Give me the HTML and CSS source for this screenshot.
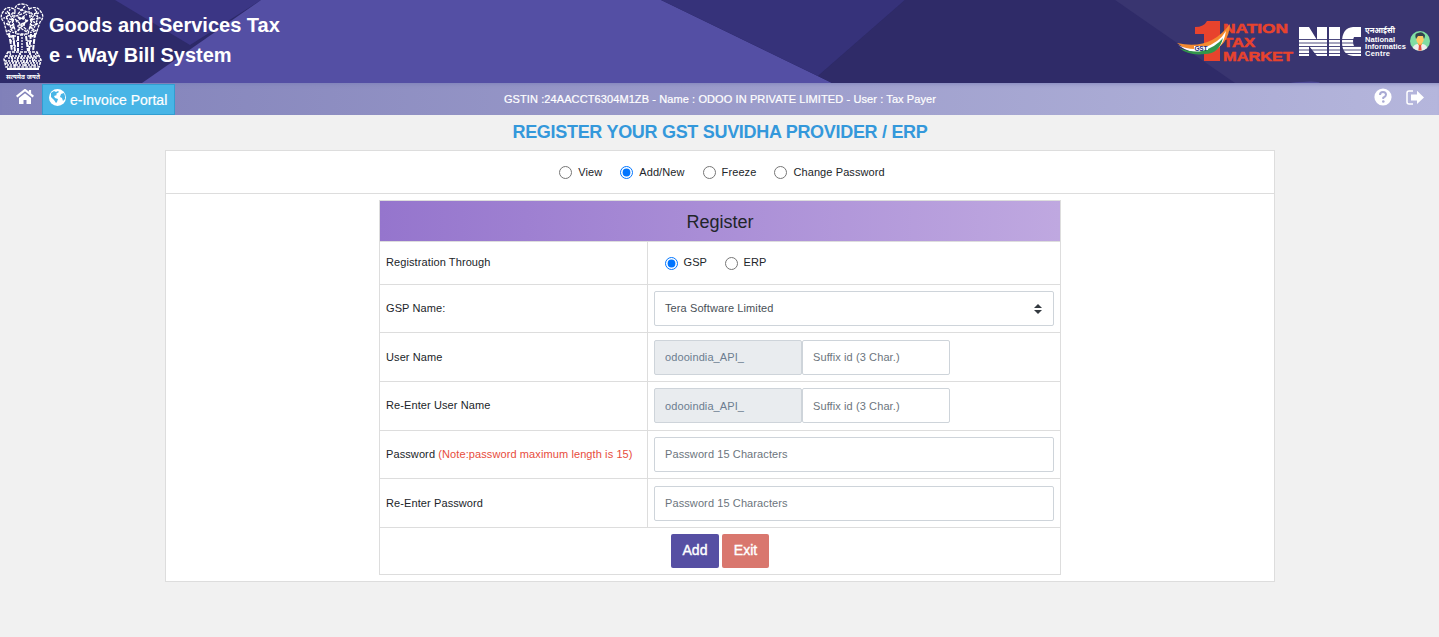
FILE: index.html
```html
<!DOCTYPE html>
<html lang="en">
<head>
<meta charset="utf-8">
<title>e-Way Bill System</title>
<link rel="stylesheet" href="styles.css">
</head>
<body>
<header class="header">
  <svg class="header-bg" viewBox="0 0 1439 83" preserveAspectRatio="none" aria-hidden="true">
    <rect width="1439" height="83" fill="#2d2a69"/>
    <path d="M115 0H261L190 45Z" fill="#3b3685"/>
    <path d="M142 83L261 0H661L832 83Z" fill="#544fa4"/>
    <path d="M661 0H905L818 76Z" fill="#36327a"/>
    <path d="M905 0H1115L1245 83H832L818 76Z" fill="#2f2b68"/>
    <path d="M1115 0H1439V83H1235Z" fill="#393570"/>
    <path d="M1290 83q27-3 30 0Z" fill="#4c4794"/>
  </svg>
  <div class="brand">
    <svg class="emblem" viewBox="0 0 44 80" aria-hidden="true">
      <g fill="none" stroke="#fff" stroke-width="1.3">
        <path d="M15 12q-1-8 7-8t7 8l2 10-3 12H16l-3-12Z" stroke-dasharray="3 1"/>
        <path d="M14 9q-8-4-11 3-4 5 1 10l3 12 6 4M29 9q8-4 12 3 4 5-1 10l-4 12-6 4" stroke-dasharray="3 1"/>
        <path d="M17 8l10 4-11 4 12 5-11 5 10 6M18 14l7-8M16 22l11-8M18 31l8-10M20 10h4M18 18h8M19 25h6M20 35h5M15 19l13 12M28 20L16 32" stroke-dasharray="3 1"/>
        <path d="M5 13l7 1-8 4 10 2-8 4 9 3-7 4 8 2M39 13l-7 1 8 4-10 2 8 4-9 3 7 4-8 2M10 9l-3 9 5 13M35 9l3 9-5 13M7 11l5 7-4 8M37 11l-5 7 4 8M13 12l-1 19M31 12l1 19" stroke-dasharray="2 1"/>
        <path d="M9 33l3 18M13 35l2 16M18 36v15M26 36l2 15M31 34l-2 17M35 33l-2 18" stroke-width="2" stroke-dasharray="5 1"/>
        <path d="M8 36h8M28 36h8M10 41h7M27 41h8M11 46h6M27 46h7M22 37v13" stroke-dasharray="2 1"/>
        <path d="M8 52h29l4 8-2 7H6l-2-8Z" stroke-width="1.6" stroke-dasharray="3 1"/>
        <path d="M6 56h33M5 61h35M7 65h31M10 53l5 14M15 66l5-13M20 53l5 13M25 66l5-13M30 53l5 13M36 53l-3 13M8 58h30M6 63h32" stroke-dasharray="2 1"/>
        <path d="M7 69h32" stroke-width="2"/>
      </g>
      <text class="motto" x="6" y="79" textLength="34" lengthAdjust="spacingAndGlyphs">सत्यमेव जयते</text>
    </svg>
    <div class="brand-name"><div class="brand-line1">Goods and Services Tax</div><div class="brand-line2">e - Way Bill System</div></div>
  </div>
  <div class="logos">
    <svg class="market" viewBox="0 0 119 42" role="img" aria-label="One Nation Tax Market">
      <path d="M31 1H44V41H28V14H19V7Q28 7 31 1Z" fill="#e8432d"/>
      <g class="market-text">
        <text x="47" y="13" textLength="65" lengthAdjust="spacingAndGlyphs">NATION</text>
        <text x="47" y="27" textLength="32" lengthAdjust="spacingAndGlyphs">TAX</text>
        <text x="47" y="40.5" textLength="70" lengthAdjust="spacingAndGlyphs">MARKET</text>
      </g>
      <path d="M1 23Q34 31 54 4Q53 25 34 32Q17 36 1 23Z" fill="#f48b31"/>
      <path d="M2 25Q14 31 27 28Q43 23 50 11Q47 30 32 33Q16 35 2 25Z" fill="#fff"/>
      <path d="M3 28Q16 33 26 31Q40 27 47 18Q43 34 29 34Q13 36 3 28Z" fill="#32964a"/>
      <path d="M18 26h14v4H18Z" fill="#fff"/>
      <text class="gst" x="18.5" y="31" textLength="13">GST</text>
    </svg>
    <svg class="nic" viewBox="0 0 110 34" role="img" aria-label="National Informatics Centre">
      <path d="M0 1H10L18 14V1H28V30H18L10 20V30H0ZM30 1H41V30H30ZM62 1V11H55Q53 15 55 20H62V30H54Q43 29 43 16Q43 2 54 1Z" fill="#fff"/>
      <path d="M0 13.5H63M0 17H63M0 20.5H63M0 24H63M0 27.5H63" stroke="#393570" stroke-width=".9"/>
      <g class="nic-text">
        <text x="66" y="7" textLength="30" lengthAdjust="spacingAndGlyphs">एनआईसी</text>
        <text x="66" y="16" textLength="30">National</text>
        <text x="66" y="23" textLength="41">Informatics</text>
        <text x="66" y="30" textLength="25">Centre</text>
      </g>
    </svg>
    <svg class="avatar" viewBox="0 0 20 20" aria-hidden="true">
      <circle cx="10" cy="10" r="10" fill="#80dda3"/>
      <path d="M2.8 17Q4 13 8 13H12Q16 13 17.2 17Q10 23 2.8 17Z" fill="#eee"/>
      <path d="M8 11h4v3l-2 1-2-1Z" fill="#edaa4b"/>
      <ellipse cx="10" cy="8.3" rx="3.7" ry="4.7" fill="#ffc963"/>
      <path d="M6 8Q4 2 8 2Q12 0 14 3Q16 4 14 8L13 5H8Z" fill="#34424c"/>
      <path d="M9 14h2l.7 5.5H8.3Z" fill="#e54d42"/>
    </svg>
  </div>
</header>
<nav class="nav">
  <div class="nav-left">
    <svg class="home" viewBox="0 0 18 15"><path d="M.7 7.7L9 1l8.3 6.7M14 1v4" fill="none" stroke="#fff" stroke-width="2.2"/><path d="M3 8.9l6-4.7 6 4.7V15h-4.5v-4h-3v4H3Z" fill="#fff"/></svg>
    <a class="portal"><svg class="globe" viewBox="0 0 17 17"><circle cx="8.5" cy="8.5" r="8.5" fill="#fff"/><path d="M2 4l3-2 2 1 2-1 1 1-3 2 1 1-3 1 1 2 3 1-1 3-1 1-2-3-3-3ZM12 5l3-1 1 3v3l-2 2-1-3-2-1 1-3Z" fill="#48b5e6"/></svg><span>e-Invoice Portal</span></a>
  </div>
  <div class="taxpayer">GSTIN :24AACCT6304M1ZB - Name : ODOO IN PRIVATE LIMITED - User : Tax Payer</div>
  <div class="nav-right">
    <svg class="help" viewBox="0 0 18 18"><circle cx="9" cy="9" r="8.6" fill="#fff"/><path d="M6 7Q6 4 9 4T12 6.8Q12 8.4 9.3 9.7V11" fill="none" stroke="#a9aad4" stroke-width="2"/><circle cx="9.3" cy="13.5" r="1.3" fill="#a9aad4"/></svg>
    <svg class="logout" viewBox="0 0 18 15"><path d="M7 1H3Q1 1 1 3V12Q1 14 3 14H7" fill="none" stroke="#fff" stroke-width="1.5"/><path d="M5 4.5h6V.8L18 7.5 11 14V10.5H5Z" fill="#fff"/></svg>
  </div>
</nav>
<main class="main">
  <h1 class="title"><span>REGISTER YOUR GST SUVIDHA PROVIDER / ERP</span></h1>
  <form class="panel">
    <div class="modes">
      <label class="view"><input type="radio" name="mode"><span>View</span></label>
      <label class="new"><input type="radio" name="mode" checked><span>Add/New</span></label>
      <label class="freeze"><input type="radio" name="mode"><span>Freeze</span></label>
      <label class="change"><input type="radio" name="mode"><span>Change Password</span></label>
    </div>
    <div class="register">
      <h2 class="register-title">Register</h2>
      <div class="row"><div class="label">Registration Through</div><div class="field through"><label class="gsp"><input type="radio" name="through" checked><span>GSP</span></label><label><input type="radio" name="through"><span>ERP</span></label></div></div>
      <div class="row"><div class="label">GSP Name:</div><div class="field"><div class="control select"><span>Tera Software Limited</span><svg class="caret" viewBox="0 0 8 10"><path d="M0 4L4 0l4 4ZM0 6h8l-4 4Z" fill="#343a40"/></svg></div></div></div>
      <div class="row"><div class="label">User Name</div><div class="field"><input class="control half" value="odooindia_API_" disabled><input class="control half" placeholder="Suffix id (3 Char.)"></div></div>
      <div class="row"><div class="label">Re-Enter User Name</div><div class="field"><input class="control half low" value="odooindia_API_" disabled><input class="control half low" placeholder="Suffix id (3 Char.)"></div></div>
      <div class="row"><div class="label">Password <span class="note">(Note:password maximum length is 15)</span></div><div class="field"><input class="control" placeholder="Password 15 Characters"></div></div>
      <div class="row"><div class="label">Re-Enter Password</div><div class="field"><input class="control" placeholder="Password 15 Characters"></div></div>
      <div class="actions"><button class="button add" type="button">Add</button><button class="button exit" type="button">Exit</button></div>
    </div>
  </form>
</main>
</body>
</html>
```
FILE: styles.css
```css
* { box-sizing: border-box; }
body { margin: 0; min-height: 637px; background: #f1f1f1; color: #212529; font: 11px/16px "Liberation Sans", Arial, sans-serif; letter-spacing: .1px; }
svg { display: block; flex: none; }
.header { height: 83px; display: flex; justify-content: space-between; position: relative; isolation: isolate; }
.header-bg { position: absolute; inset: 0; width: 100%; height: 100%; z-index: -1; }
.brand { display: flex; gap: 5px; }
.emblem { width: 44px; height: 80px; }
.motto { font: bold 7px "Noto Sans", sans-serif; fill: #fff; letter-spacing: 0; }
.brand-name { color: #fff; font-size: 20px; font-weight: bold; line-height: 30px; padding-top: 10px; letter-spacing: 0; }
.logos { display: flex; padding: 20px 9px 0 0; }
.market { width: 119px; height: 42px; margin-right: 4px; }
.market-text { font: bold 13.5px/1 "Liberation Sans", sans-serif; fill: #e8432d; stroke: #e8432d; stroke-width: .5; letter-spacing: 0; }
.gst { font: bold 6.5px "Liberation Sans", sans-serif; fill: #292b75; }
.nic { width: 110px; height: 34px; margin: 6px 1px 0 0; }
.nic-text { font: bold 7.5px "Liberation Sans", "Noto Sans", sans-serif; fill: #fff; letter-spacing: 0; }
.avatar { width: 20px; height: 20px; margin-top: 11px; }
.nav { height: 32px; display: grid; grid-template-columns: 1fr auto 1fr; align-items: center; background: linear-gradient(90deg, #8181b9, #b5b6dc); box-shadow: inset 0 4px 5px -4px #777bb5; color: #fff; }
.nav-left { height: 32px; display: flex; }
.home { width: 18px; height: 15px; margin: 6px 8px 0 16px; }
.portal { width: 133px; height: 31px; margin-top: 1px; border: 1px solid #319ed1; background: #48b5e6; font-size: 14px; display: flex; padding: 4px 0 0 6px; gap: 4px; letter-spacing: 0; -webkit-text-stroke: .2px #fff; }
.portal span { line-height: 22px; }
.globe { width: 17px; height: 17px; }
.taxpayer { font-size: 11px; font-weight: 400; -webkit-text-stroke: .2px #fff; padding-left: 1px; }
.nav-right { display: flex; justify-content: flex-end; gap: 14px; padding: 0 15px 4px 0; align-items: center; }
.help { width: 18px; height: 18px; }
.logout { width: 18px; height: 15px; }
.title { margin: 0; padding-left: 1px; height: 35px; text-align: center; color: #3498db; font-size: 18px; line-height: 34px; font-weight: bold; letter-spacing: -.3px; }
.panel { width: 1110px; height: 432px; margin: 0 auto; background: #fff; border: 1px solid #ddd; }
.modes { height: 43px; border-bottom: 1px solid #ddd; display: flex; justify-content: center; padding-left: 5px; }
label { display: flex; align-items: center; }
input[type="radio"] { width: 13px; height: 13px; margin: 0 6px 0 0; }
.modes label { margin-right: 18px; }
.modes .change { margin-right: 0; }
.register { width: 682px; height: 375px; margin: 6px auto 0; border: 1px solid #ddd; display: grid; grid-template-rows: 41px 43px 48px 49px 49px 48px 49px 46px; }
.register-title { margin: 0; padding-left: 1px; border-bottom: 1px solid #ddd; background: linear-gradient(90deg, #9575cd, #bfa8e0); text-align: center; font-size: 18px; line-height: 42px; font-weight: 400; letter-spacing: 0; }
.row { display: grid; grid-template-columns: 268px 412px; border-bottom: 1px solid #ddd; }
.label { padding: 12px 0 0 6.5px; border-right: 1px solid #ddd; }
.row:nth-child(n+3) .label { padding-top: 15px; }
.row:nth-child(4) .label, .row:nth-child(7) .label { padding-top: 16px; }
.field { padding: 6px; display: flex; }
.row:nth-child(4) .field, .row:nth-child(7) .field { padding-top: 7px; }
.through { padding: 0 0 0 17px; }
.through span { padding-bottom: 2px; }
.gsp { margin-right: 17.5px; }
.control { width: 400px; height: 35px; border: 1px solid #ced4da; border-radius: 2px; background: #fff; padding: 0 10px 2px 10.5px; font: inherit; letter-spacing: inherit; color: #495057; }
.control.low { padding-bottom: 0; }
.control::placeholder { color: #6c757d; opacity: 1; }
.control:disabled { background: #e9ecef; color: #6c7d90; }
.half { width: 148px; }
.select { display: flex; align-items: center; justify-content: space-between; }
.caret { width: 8px; height: 10px; margin: 2px 1px 0 0; }
.note { color: #e74c3c; }
.actions { display: flex; justify-content: center; gap: 3px; padding-top: 6px; }
.button { width: 48px; height: 34px; padding: 0 0 2px 1px; border: 0; border-radius: 2px; color: #fff; font: 14px "Liberation Sans", Arial, sans-serif; -webkit-text-stroke: .4px #fff; }
.add { background: #564fa3; }
.exit { width: 47px; background: #d9776e; }
```
